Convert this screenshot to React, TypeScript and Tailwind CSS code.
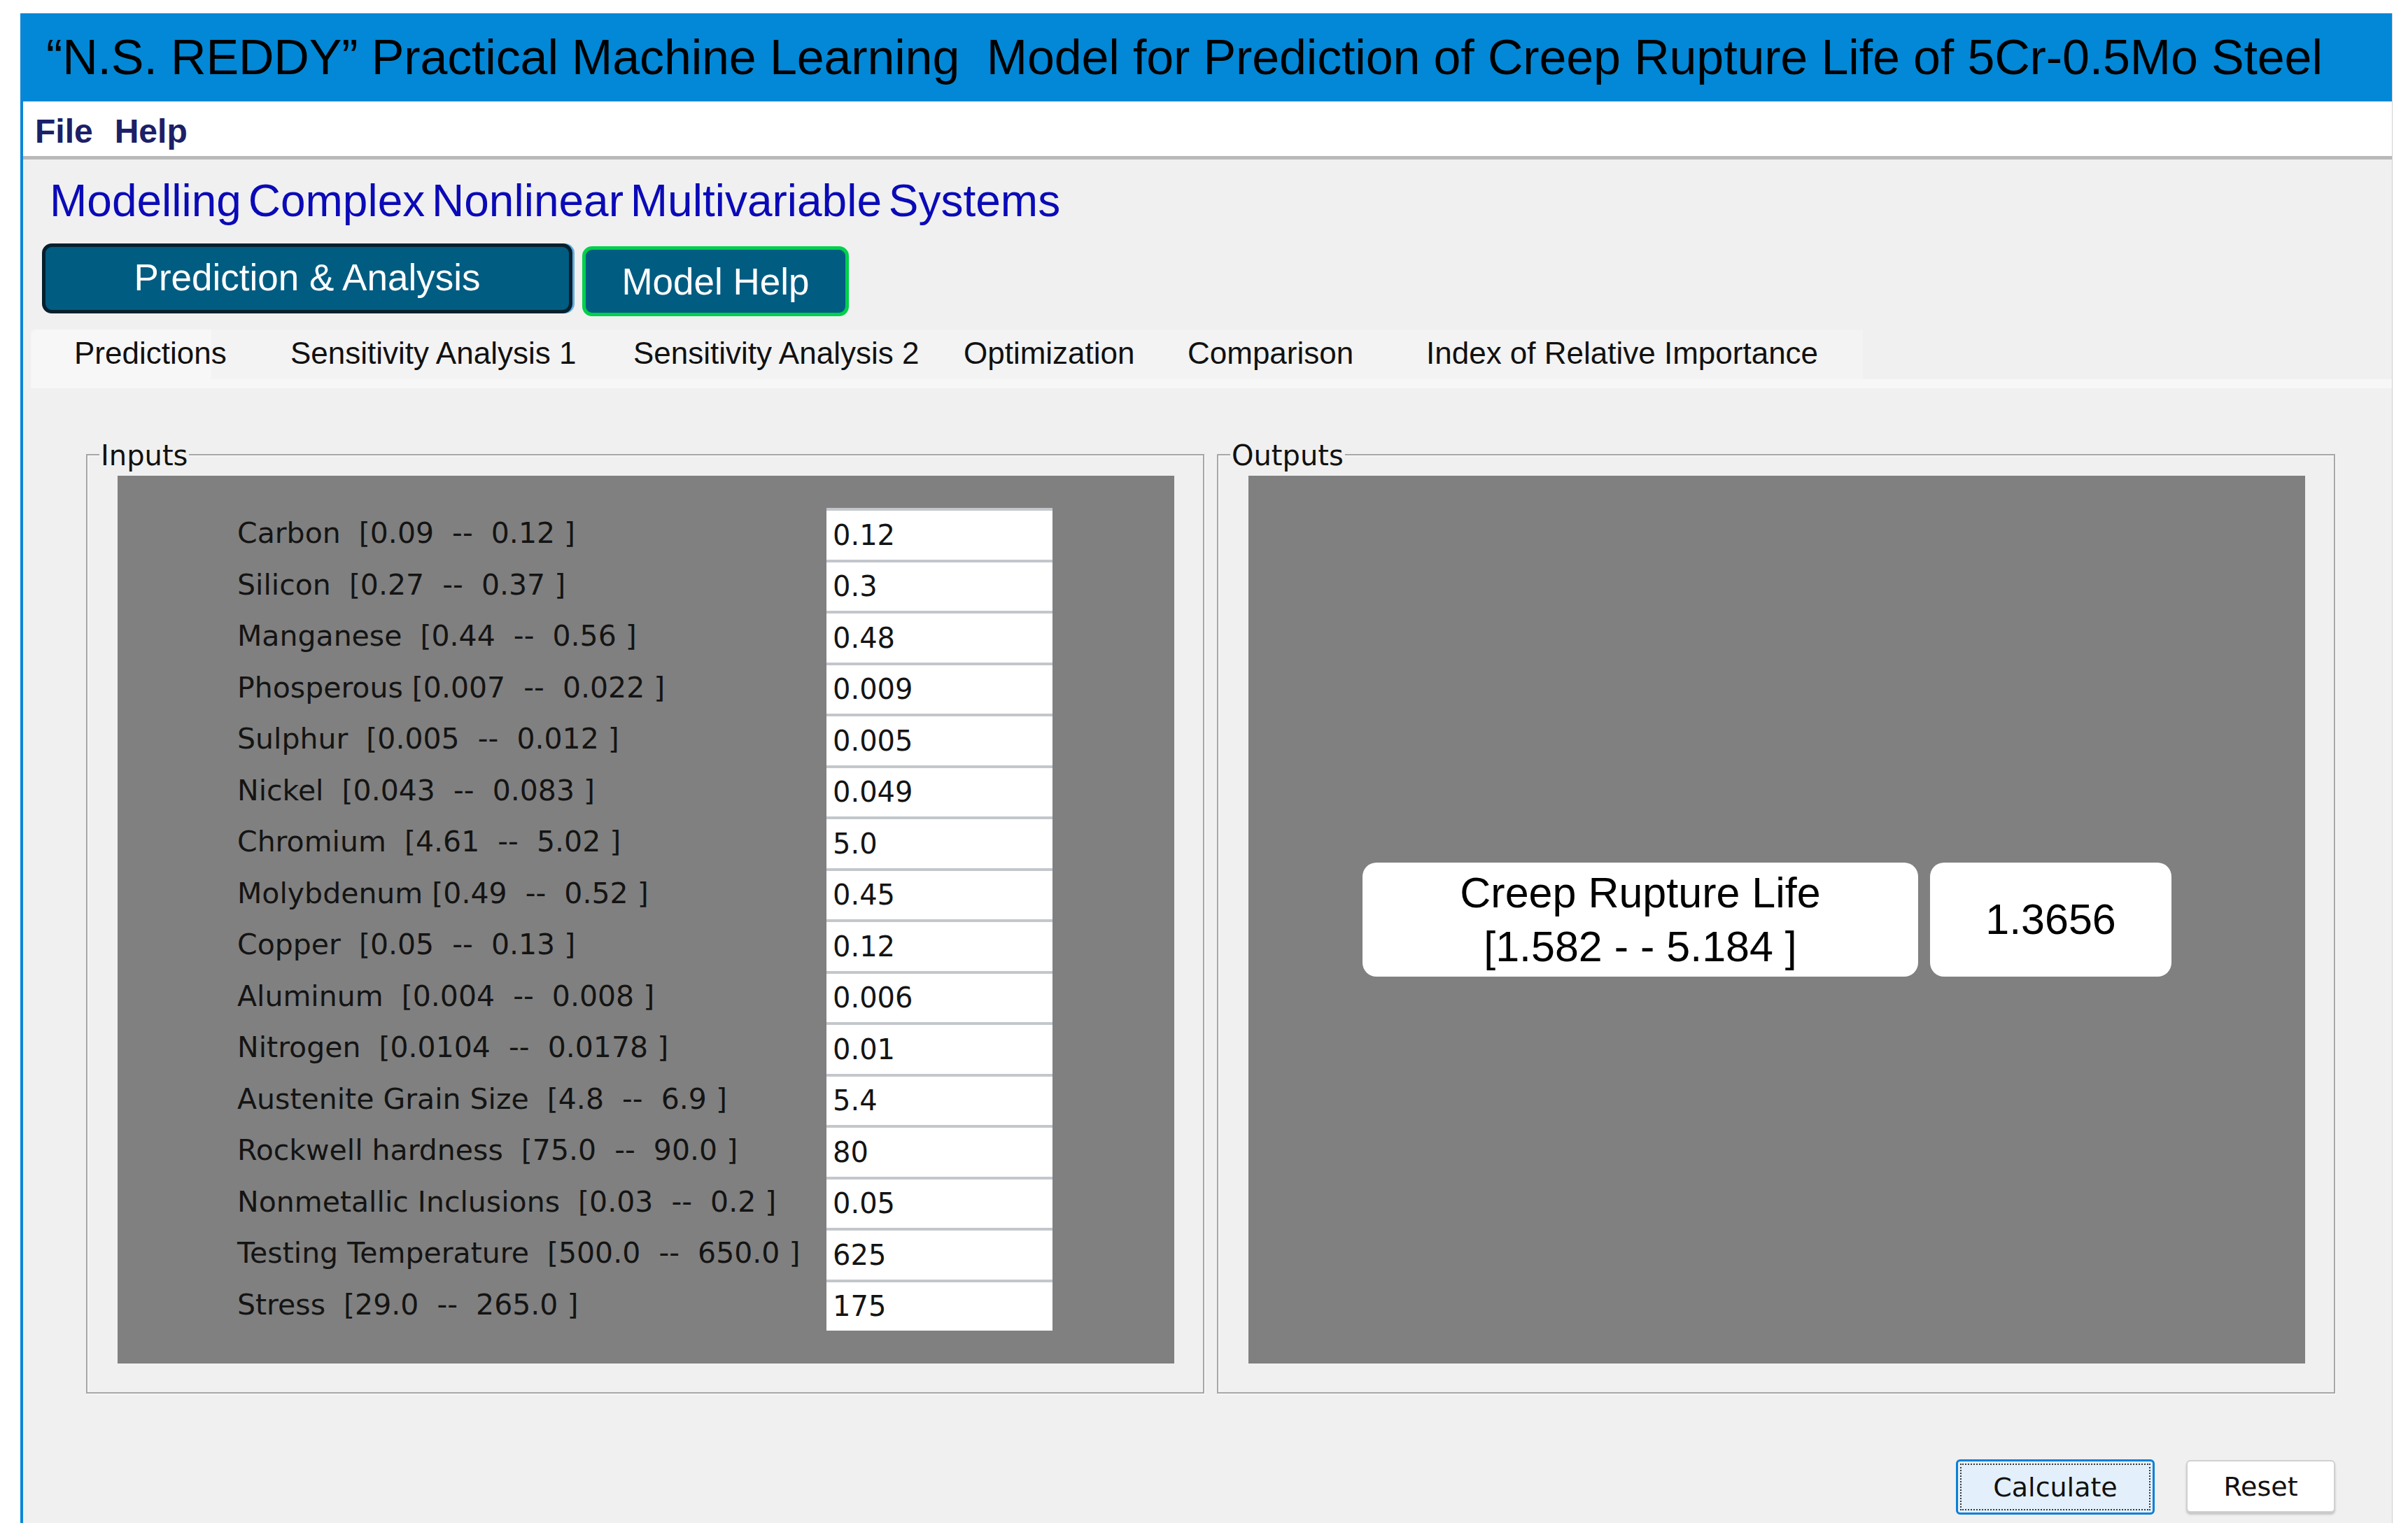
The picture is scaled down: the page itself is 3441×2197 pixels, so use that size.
const inputs: [string, string][] = [
  ["Carbon  [0.09  --  0.12 ]", "0.12"],
  ["Silicon  [0.27  --  0.37 ]", "0.3"],
  ["Manganese  [0.44  --  0.56 ]", "0.48"],
  ["Phosperous [0.007  --  0.022 ]", "0.009"],
  ["Sulphur  [0.005  --  0.012 ]", "0.005"],
  ["Nickel  [0.043  --  0.083 ]", "0.049"],
  ["Chromium  [4.61  --  5.02 ]", "5.0"],
  ["Molybdenum [0.49  --  0.52 ]", "0.45"],
  ["Copper  [0.05  --  0.13 ]", "0.12"],
  ["Aluminum  [0.004  --  0.008 ]", "0.006"],
  ["Nitrogen  [0.0104  --  0.0178 ]", "0.01"],
  ["Austenite Grain Size  [4.8  --  6.9 ]", "5.4"],
  ["Rockwell hardness  [75.0  --  90.0 ]", "80"],
  ["Nonmetallic Inclusions  [0.03  --  0.2 ]", "0.05"],
  ["Testing Temperature  [500.0  --  650.0 ]", "625"],
  ["Stress  [29.0  --  265.0 ]", "175"],
];

const tabs = [
  { label: "Predictions", cls: "w-[258px] pl-[62px] bg-[#f7f7f7] rounded-tl-[10px]" },
  { label: "Sensitivity Analysis 1", cls: "w-[603px] pl-[113px]" },
  { label: "Sensitivity Analysis 2", cls: "w-[472px]" },
  { label: "Optimization", cls: "w-[320px]" },
  { label: "Comparison", cls: "w-[341px]" },
  { label: "Index of Relative Importance", cls: "w-[624px]" },
];

function Legend({ text }: { text: string }) {
  return (
    <span className="absolute left-[17px] top-[-20px] px-[2px] bg-[#f0f0f0] text-[40px] leading-none text-[#111] font-['DejaVu_Sans',sans-serif]">
      {text}
    </span>
  );
}

const groupBox =
  "relative h-[1343px] w-[1598px] border-2 border-[#a6a6a6] shadow-[inset_1px_1px_0_#ffffff,1px_1px_0_#ffffff] pt-[29px] pl-[43px] pr-[41px] pb-[41px]";

export default function App() {
  return (
    <div className="w-[3441px] h-[2197px] bg-white pt-[19px] pl-[29px] overflow-hidden font-['Liberation_Sans',Arial,sans-serif]">
      <div className="w-[3390px] h-[2158px] flex flex-col border-l-4 border-l-[#0b87d8] border-r border-r-[#cfcfcf]">
        {/* title bar */}
        <div className="h-[126px] shrink-0 bg-[#0288d6] flex items-center pl-[33px]">
          <span className="text-[70px] leading-none text-black whitespace-pre tracking-[-0.15px]">
            {"“N.S. REDDY” Practical Machine Learning  Model for Prediction of Creep Rupture Life of 5Cr-0.5Mo Steel"}
          </span>
        </div>

        {/* menu */}
        <div className="h-[83px] shrink-0 bg-white border-b-[5px] border-b-[#b9b9b9] flex items-center pl-[17px] pt-[8px] gap-[31px] text-[48px] font-bold text-[#1c2068]">
          <span>File</span>
          <span>Help</span>
        </div>

        <div className="flex-1 bg-[#f0f0f0] flex flex-col">
          <div className="h-[117px] flex items-center pl-[38px]">
            <span className="text-[64px] leading-none text-[#0a0ab8] [word-spacing:-8px]">
              Modelling Complex Nonlinear Multivariable Systems
            </span>
          </div>

          <div className="h-[115px] flex items-start gap-[14px] pl-[27px] pt-[3px]">
            <button className="w-[758px] h-[100px] rounded-[14px] border-[5px] border-[#06202e] bg-[#015c82] text-white text-[53px] leading-none pb-[4px] shadow-[3px_0_0_#63aede]">
              Prediction &amp; Analysis
            </button>
            <button className="w-[381px] h-[100px] mt-[4px] rounded-[14px] border-[5px] border-[#00d04c] bg-[#015c82] text-white text-[53px] leading-none">
              Model Help
            </button>
          </div>

          <div className="mt-[11px] h-[71px] ml-[11px] w-[2618px] flex bg-[#f3f3f3]">
            {tabs.map((t) => (
              <div key={t.label} className={`flex items-center pb-[3px] text-[44px] leading-none text-[#111] whitespace-nowrap ${t.cls}`}>
                {t.label}
              </div>
            ))}
          </div>
          <div className="h-[13px] ml-[11px] bg-[#f7f7f7]" />

          <div className="mt-[94px] flex gap-[18px] pl-[90px]">
            <div className={groupBox}>
              <Legend text="Inputs" />
              <div className="w-full h-full bg-[#808080] flex flex-col pt-[46px] pl-[171px]">
                {inputs.map(([label, value]) => (
                  <div key={label} className="flex h-[73.5px] items-stretch">
                    <div className="w-[842px] flex items-center whitespace-pre text-[41px] leading-none text-[#141414] font-['DejaVu_Sans',sans-serif]">
                      {label}
                    </div>
                    <div className="w-[323px] bg-white border-t-4 border-t-[#c3c7cc] pl-[9px] flex items-center text-[40px] leading-none text-[#141414] font-['DejaVu_Sans',sans-serif]">
                      {value}
                    </div>
                  </div>
                ))}
              </div>
            </div>

            <div className={groupBox}>
              <Legend text="Outputs" />
              <div className="w-full h-full bg-[#808080] flex items-center justify-center gap-[17px] pr-[28px]">
                <div className="w-[794px] h-[163px] rounded-[20px] bg-white flex flex-col items-center justify-center text-[61px] leading-[77px] text-black">
                  <span>Creep Rupture Life</span>
                  <span className="whitespace-pre">[1.582 - - 5.184 ]</span>
                </div>
                <div className="w-[345px] h-[163px] rounded-[20px] bg-white flex items-center justify-center text-[61px] leading-none text-black">
                  1.3656
                </div>
              </div>
            </div>
          </div>

          <div className="mt-[94px] flex justify-end items-start gap-[45px] pr-[81px]">
            <button className="w-[284px] h-[79px] rounded-[6px] border-[3px] border-[#0a7fd8] bg-[#e3f0fb] p-[3px]">
              <span className="w-full h-full flex items-center justify-center border-2 border-dotted border-[#3a3a3a] text-[38px] leading-none text-[#111] font-['DejaVu_Sans',sans-serif]">
                Calculate
              </span>
            </button>
            <button className="w-[213px] h-[75px] mt-[1px] rounded-[6px] border-2 border-[#d0d0d0] bg-white shadow-[0_3px_3px_rgba(0,0,0,0.18)] flex items-center justify-center text-[38px] leading-none text-[#111] font-['DejaVu_Sans',sans-serif]">
              Reset
            </button>
          </div>
        </div>
      </div>
    </div>
  );
}
